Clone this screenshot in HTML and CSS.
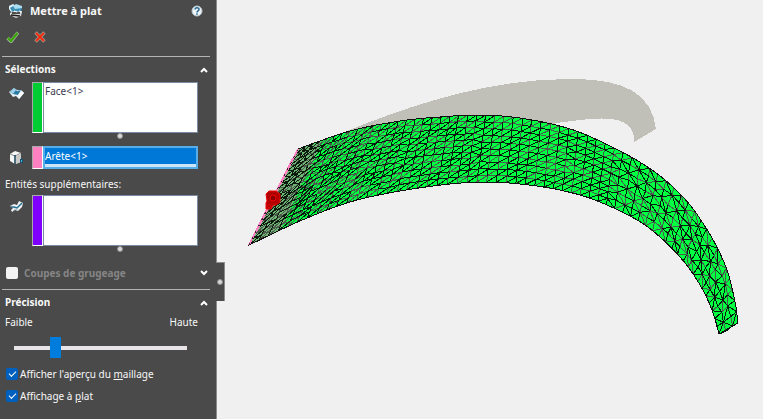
FILE: index.html
```html
<!DOCTYPE html>
<html lang="fr">
<head>
<meta charset="utf-8">
<title>Mettre à plat</title>
<link rel="stylesheet" href="styles.css">
</head>
<body>
<aside class="panel">
  <header class="title">
    <svg class="title-icon" viewBox="0 0 16 16" aria-hidden="true">
      <path d="M1 3 5 1l3 2v4L3 9 1 6z" fill="#dff2fa"/>
      <path d="M2 5 5 3l6-1 3 3-1 4-8 1z" fill="#3c8fb5"/>
      <path d="M5 3 8 1l6 2v2L7 6z" fill="#a9ddf2"/>
      <path d="M2 10 6 8l8 1-1 4-5 2-6-3z" fill="#d8d8d8"/>
      <path d="M4 10h8M3 12l9 1" stroke="#222" stroke-width="1.5"/>
      <path d="M6 8l3 1M11 8l3 1" stroke="#fff"/>
    </svg>
    <h1>Mettre à plat</h1>
    <button class="icon-button" aria-label="Aide">
      <svg class="help" viewBox="0 0 12 12">
        <circle cx="6" cy="6" r="5" fill="#eef4f8" stroke="#b8c5cf"/>
        <path d="M4 4.6C4 2.2 8 2.2 8 4.4 8 6 6 5.8 6 7.4" fill="none" stroke="#28688f" stroke-width="1.5"/>
        <path d="M6 8.3v1.4" stroke="#28688f" stroke-width="1.5"/>
      </svg>
    </button>
  </header>
  <div class="confirm">
    <button class="icon-button" aria-label="OK">
      <svg class="ok" viewBox="0 0 13 12"><path d="M1.5 7 5 10.5 12 1.5" fill="none" stroke="#a0aa98" stroke-width="3.4"/><path d="M1.8 7 5 10 11.5 2" fill="none" stroke="#35a800" stroke-width="2"/></svg>
    </button>
    <button class="icon-button" aria-label="Annuler">
      <svg class="cancel" viewBox="0 0 12 12"><path d="M1.5 1.5 10.5 10.5M10.5 1.5 1.5 10.5" stroke="#a49a96" stroke-width="3.4"/><path d="M2 2 10 10M10 2 2 10" stroke="#f22a08" stroke-width="2"/></svg>
    </button>
  </div>

  <section class="group">
    <h2>Sélections <svg class="chevron" viewBox="0 0 8 6"><path d="M1 5 4 2 7 5"/></svg></h2>
    <div class="field">
      <svg class="field-icon" viewBox="0 0 15 15" aria-hidden="true">
        <path d="M0 6 5 2 8 4 12 4 15 7 10 13 7 10 4 11z" fill="#e4f1f7"/>
        <path d="M5 2 8 5 12 4 9 9 4 8 1 6z" fill="#2d7ca5"/>
        <path d="M1 6 5 2 7 4 4 8z" fill="#9bd0e8"/>
        <path d="M9 9 13 5 15 7 10 13z" fill="#f6fafc"/>
      </svg>
      <span class="swatch green"></span>
      <textarea class="list" aria-label="Face" readonly>Face&lt;1&gt;</textarea>
    </div>
    <div class="grip"></div>
    <div class="field">
      <svg class="field-icon" viewBox="0 0 15 15" aria-hidden="true">
        <path d="M1 4 6 1 12 3 12 12 6 14 1 11z" fill="#f6f6f4"/>
        <path d="M1 4 6 6 12 3" fill="none" stroke="#8d8d8b"/>
        <path d="M7 6 12 4V12L7 14z" fill="#c9c9c7"/>
        <path d="M6 5V14" stroke="#153f57" stroke-width="1.5"/>
        <path d="M11 9h3v4h-3z" fill="#12506f"/>
        <path d="M12 10h1v2h-1z" fill="#54b5dc"/>
      </svg>
      <span class="swatch pink"></span>
      <input class="active" aria-label="Arête" value="Arête&lt;1&gt;" readonly>
    </div>
    <label class="caption" for="extra">Entités supplémentaires:</label>
    <div class="field">
      <svg class="field-icon" viewBox="0 0 15 15" aria-hidden="true">
        <path d="M1 7 5 5 8 6 10 2 14 4 13 8 9 12 6 11 3 13 2 11 4 9z" fill="#eef2f3"/>
        <path d="M2 8 5 8 8 9 13 4" fill="none" stroke="#286f91" stroke-width="1.5"/>
        <path d="M4 12 6 10 9 11" fill="none" stroke="#b9c2c6"/>
      </svg>
      <span class="swatch violet"></span>
      <textarea class="list" id="extra" readonly></textarea>
    </div>
    <div class="grip"></div>
    <div class="relief">
      <input type="checkbox" id="relief"><label for="relief">Coupes de grugeage</label>
      <svg class="chevron" viewBox="0 0 8 6"><path d="M1 1 4 4 7 1"/></svg>
    </div>
  </section>

  <section class="group">
    <h2>Précision <svg class="chevron" viewBox="0 0 8 6"><path d="M1 5 4 2 7 5"/></svg></h2>
    <div class="scale"><span>Faible</span><span>Haute</span></div>
    <input class="slider" type="range" min="0" max="100" value="22" aria-label="Précision">
    <div class="option"><input type="checkbox" id="mesh-on" checked><label for="mesh-on">Afficher l'aperçu du <u>m</u>aillage</label></div>
    <div class="option"><input type="checkbox" id="flat-on" checked><label for="flat-on">Affichage à <u>p</u>lat</label></div>
  </section>
  <button class="splitter" aria-label="Réduire le panneau"></button>
</aside>
<main class="scene">
  <svg viewBox="217 0 546 419" preserveAspectRatio="xMinYMin meet" role="img" aria-label="Aperçu du maillage">
    <path class="ghost" d="M330 138C390 113 480 78 573 79C625 79 652 94 656 129L634 142C636 108 585 120 556 123L480 150L345 150Z"/>
    <path class="surface" id="surface"/>
    <path class="faded" d="M249 245 298 149 323 141 311 166 300 187 293 203 281 230Z"/>
    <path class="wire-soft" id="wire-soft"/>
    <path class="wire" id="wire"/>
    <path class="rim" id="rim"/>
    <path class="edge" d="M249 245 298 149"/>
    <path class="edge-dash" d="M249 245 298 149"/>
    <g class="handle">
      <path d="M266 194l3-3h7l4 3v8l-4 3-3 0-2 4h-5v-6l1-2z"/>
      <circle cx="273" cy="198" r="3"/>
      <circle cx="269" cy="206" r="1.5"/>
    </g>
  </svg>
</main>
<script src="mesh.js"></script>
</body>
</html>
```
FILE: styles.css
```css
* { box-sizing: border-box; }
body {
  margin: 0;
  min-height: 100vh;
  display: flex;
  background: #f0f0f0;
  color: #f8f8f8;
  font: 10px/15px "Noto Sans", "Open Sans", sans-serif;
}
h1, h2 { margin: 0; }
button, input, textarea { font: inherit; margin: 0; }
svg { display: block; flex: none; }
.panel {
  position: relative;
  flex: none;
  width: 217px;
  padding: 0 6px 0 2px;
  background: #4a4a4a;
  border-right: 1px solid #8c8c8c;
}
.title { display: flex; align-items: center; height: 22px; padding: 0 7px 0 6px; }
.title-icon { width: 16px; height: 16px; margin-right: 6px; }
.title h1 { flex: 1; font-size: 11px; line-height: 16px; }
.icon-button { padding: 0; border: 0; background: none; }
.help, .cancel { width: 12px; height: 12px; }
.confirm { display: flex; align-items: center; gap: 15px; height: 34px; padding: 0 4px 4px; }
.ok { width: 13px; height: 12px; }
.group { border-top: 1px solid #b4b4b4; }
.group h2 {
  display: flex;
  align-items: center;
  justify-content: space-between;
  height: 25px;
  padding: 0 2px 0 3px;
  font-size: 10px;
  line-height: 15px;
}
.chevron { width: 8px; height: 6px; fill: none; stroke: #fff; stroke-width: 2; }
.field { display: flex; padding-right: 12px; }
.field-icon { width: 15px; height: 15px; margin: 4px 8px 0 7px; }
.swatch { width: 11px; border: 1px solid #a8a8a8; border-right-color: #fff; border-bottom-color: #fff; }
.green { background: #00cc33; }
.pink { background: #ff80c0; }
.violet { background: #8000ff; }
.list {
  flex: 1;
  min-width: 0;
  height: 51px;
  padding: 1px;
  border: 1px solid #7b8ba6;
  background: #fff;
  color: #3b3b50;
  resize: none;
  outline: none;
}
.active {
  flex: 1;
  min-width: 0;
  height: 23px;
  padding: 0 0 4px;
  border: 2px solid #55aee8;
  background: linear-gradient(#0078d7 16px, #cce4f8 16px);
  color: #fff;
  outline: none;
}
.grip { height: 13px; padding: 0 0 0 27px; }
.grip::before, .splitter::before {
  content: "";
  display: block;
  box-sizing: border-box;
  width: 6px;
  height: 6px;
  margin: 0 auto;
  border-radius: 50%;
  background: #d8d8d8;
  border: 1px solid #929292;
}
.caption { display: block; height: 26px; padding: 8px 0 0 3px; }
.relief { display: flex; align-items: center; height: 30px; padding: 0 2px 2px 4px; color: #858585; font-weight: bold; }
.relief label { flex: 1; }
.scale { display: flex; justify-content: space-between; padding: 0 12px 0 3px; }
.slider {
  appearance: none;
  display: block;
  width: calc(100% - 35px);
  height: 21px;
  margin: 7px 0 5px 12px;
  background: linear-gradient(#e8e4e8, #e8e4e8) center / 100% 4px no-repeat;
}
.slider::-webkit-slider-thumb { appearance: none; width: 11px; height: 21px; background: #007cdc; }
.option { display: flex; align-items: center; gap: 2px; height: 22px; padding-left: 4px; }
input[type="checkbox"] {
  appearance: none;
  display: grid;
  place-items: center;
  flex: none;
  width: 12px;
  height: 12px;
  border-radius: 2px;
  background: #f3f3f3;
}
.relief input { margin-right: 6px; }
input[type="checkbox"]:checked { background: #0060c0; }
input[type="checkbox"]:checked::after {
  content: "";
  width: 6px;
  height: 3px;
  margin-bottom: 2px;
  border: solid #fff;
  border-width: 0 0 1px 1px;
  transform: rotate(-45deg);
}
.splitter {
  position: absolute;
  left: 100%;
  top: 262px;
  width: 9px;
  height: 39px;
  padding: 0;
  border: solid #8c8c8c;
  border-width: 1px 1px 0 0;
  background: #4a4a4a;
}
.scene { flex: 1; min-width: 0; }
.scene svg { width: 100%; }
.ghost { fill: #c0c0b9; }
.surface { fill: #00ff40; }
.faded { fill: #70b574; }
.wire, .wire-soft, .rim, .edge, .edge-dash { fill: none; shape-rendering: crispEdges; }
.ghost, .surface { shape-rendering: crispEdges; }
.wire { stroke: #0a1a0c; }
.wire-soft { stroke: #4c5a4e; }
.rim { stroke: #101010; }
.edge { stroke: #ff80c0; stroke-width: 2; }
.edge-dash { stroke: #3b2a32; stroke-dasharray: 2 5; }
.handle path { fill: #b00000; stroke: #f00000; }
.handle circle { fill: #8a0000; stroke: #f00000; }
```
FILE: mesh.js
```js
// Builds the triangulated band between an outer and an inner curve.
const outer = [[298,149],[350,131],[400,121],[440,117],[478,115],[520,118],[567,128],[602,142],[638,161],[665,180],[690,205],[712,238],[727,270],[735,302],[738,323]];
const inner = [[249,245],[300,221],[350,202],[400,191],[450,184],[487,182],[520,184],[560,190],[600,202],[645,225],[680,257],[700,285],[712,310],[719,334]];

function sampleCurve(points) {
  const out = [];
  for (let i = 0; i < points.length - 1; i++) {
    const a = points[Math.max(i - 1, 0)], b = points[i], c = points[i + 1], d = points[Math.min(i + 2, points.length - 1)];
    for (let k = 0; k < 20; k++) {
      const t = k / 20;
      out.push([0, 1].map(n => 0.5 * (2 * b[n] + (c[n] - a[n]) * t + (2 * a[n] - 5 * b[n] + 4 * c[n] - d[n]) * t * t + (3 * b[n] - a[n] - 3 * c[n] + d[n]) * t * t * t)));
    }
  }
  out.push(points[points.length - 1]);
  return out;
}

function curveAt(samples) {
  const length = [0];
  for (let i = 1; i < samples.length; i++) {
    length.push(length[i - 1] + Math.hypot(samples[i][0] - samples[i - 1][0], samples[i][1] - samples[i - 1][1]));
  }
  return u => {
    const goal = u * length[length.length - 1];
    let i = 1;
    while (i < samples.length - 1 && length[i] < goal) i++;
    const t = (goal - length[i - 1]) / (length[i] - length[i - 1]);
    return [0, 1].map(n => samples[i - 1][n] + (samples[i][n] - samples[i - 1][n]) * t);
  };
}

const outerLine = sampleCurve(outer), innerLine = sampleCurve(inner);
const outerAt = curveAt(outerLine), innerAt = curveAt(innerLine);
const text = p => p[0].toFixed(1) + " " + p[1].toFixed(1);
const wave = n => { const v = Math.sin(n * 12.9898) * 43758.5453; return v - Math.floor(v) - 0.5; };

const columns = [];
const total = 58;
for (let c = 0; c <= total; c++) {
  const s = c / total, u = s * (0.8 + 0.2 * s);
  // The slanted left edge makes the inner curve run ahead until columns stand upright.
  const a = outerAt(u), b = innerAt(u + 0.42 * u * (1 - u) * (1 - u * 0.3));
  const width = Math.hypot(a[0] - b[0], a[1] - b[1]);
  const rows = Math.max(3, Math.round(width / (u < 0.6 ? 6.5 : 8)));
  const column = [];
  for (let r = 0; r <= rows; r++) {
    const t = r / rows;
    const shift = r > 0 && r < rows ? (u < 0.6 ? 0.8 : 2) : 0;
    column.push([a[0] + (b[0] - a[0]) * t + wave(c * 31 + r) * shift, a[1] + (b[1] - a[1]) * t + wave(c * 17 + r * 7) * shift]);
  }
  columns.push(column);
}

let dark = "", soft = "", count = 0;
function line(p, q) {
  if (wave(count++) > 0.1) soft += "M" + text(p) + "L" + text(q);
  else dark += "M" + text(p) + "L" + text(q);
}
columns.forEach((column, c) => {
  for (let r = 1; r < column.length; r++) line(column[r - 1], column[r]);
  const next = columns[c + 1];
  if (!next) return;
  let i = 0, j = 0;
  while (i < column.length - 1 || j < next.length - 1) {
    const left = (i + 1) / (column.length - 1), right = (j + 1) / (next.length - 1);
    const flip = c > 36 && (c + i) % 2 ? -0.03 : 0.03;
    if (j >= next.length - 1 || (i < column.length - 1 && left < right + flip)) i++;
    else j++;
    line(column[i], next[j]);
  }
});

const border = "M" + outerLine.map(text).join("L") + "L" + innerLine.slice().reverse().map(text).join("L") + "Z";
document.getElementById("surface").setAttribute("d", border);
document.getElementById("rim").setAttribute("d", border);
document.getElementById("wire").setAttribute("d", dark);
document.getElementById("wire-soft").setAttribute("d", soft);
```
